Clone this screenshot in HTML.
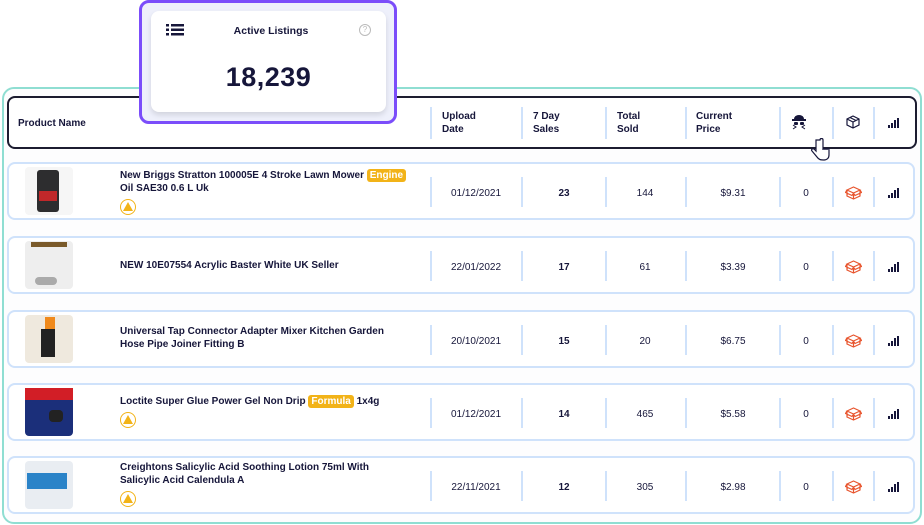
<!DOCTYPE html><html><head><style>
*{margin:0;padding:0;box-sizing:border-box}
body{width:924px;height:525px;background:#fff;font-family:"Liberation Sans",sans-serif;color:#16163a;position:relative;overflow:hidden}
.a{position:absolute}
.outer{left:2px;top:87px;width:920px;height:437px;border:2px solid #8fded2;border-radius:12px;background:#fdfdfe}
.hdr{left:7px;top:96px;width:910px;height:53px;border:2px solid #1c1c30;border-radius:8px;background:#fff}
.h{font-size:10px;font-weight:bold;line-height:13px}
.row{left:7px;width:908px;height:58px;border:2px solid #cfe2fb;border-radius:8px;background:#fff}
.div{width:2px;background:#cfe2fb}
.img{width:48px;height:48px;border-radius:4px;background:#f4f4f4}
.t{font-size:10px;font-weight:bold;line-height:13px;left:120px}
.tag{display:inline-block;background:#f2b318;color:#fff;border-radius:3px;padding:0 3px;line-height:13px}
.c{font-size:10px;text-align:center;width:80px}
.warn{width:16px;height:16px;border:1.5px solid #f2b318;border-radius:50%;left:120px}
.warn:after{content:"";position:absolute;left:2px;top:2px;border-left:5px solid transparent;border-right:5px solid transparent;border-bottom:9px solid #f2b318}
.bars{width:12px;height:10px}
.bars i{position:absolute;bottom:0;width:2px;background:#16163a}
</style></head><body>
<div class="a outer"></div>
<div class="a hdr"></div>
<div class="a h" style="left:18px;top:117px">Product Name</div>
<div class="a div" style="left:430px;top:107px;height:32px"></div>
<div class="a div" style="left:521px;top:107px;height:32px"></div>
<div class="a div" style="left:605px;top:107px;height:32px"></div>
<div class="a div" style="left:685px;top:107px;height:32px"></div>
<div class="a div" style="left:779px;top:107px;height:32px"></div>
<div class="a div" style="left:832px;top:107px;height:32px"></div>
<div class="a div" style="left:873px;top:107px;height:32px"></div>
<div class="a h" style="left:442px;top:110px">Upload<br>Date</div>
<div class="a h" style="left:533px;top:110px">7 Day<br>Sales</div>
<div class="a h" style="left:617px;top:110px">Total<br>Sold</div>
<div class="a h" style="left:696px;top:110px">Current<br>Price</div>
<svg class="a" style="left:790px;top:113px" width="18" height="18" viewBox="0 0 18 18"><path d="M4 6a5 4 0 0 1 10 0z" fill="#16163a"/><rect x="2" y="6" width="14" height="2" fill="#16163a"/><rect x="4" y="9" width="4" height="3" rx="1" fill="#16163a"/><rect x="10" y="9" width="4" height="3" rx="1" fill="#16163a"/><path d="M3 16l3-2-3-2M15 16l-3-2 3-2" stroke="#16163a" fill="none"/></svg>
<svg class="a" style="left:846px;top:115px" width="14" height="14" viewBox="0 0 14 14" fill="none" stroke="#16163a" stroke-width="1.2"><path d="M7 1l6 3v6l-6 3-6-3V4z M1 4l6 3 6-3 M7 7v6 M4 2.5l6 3"/></svg>
<div class="a bars" style="left:888px;top:118px"><i style="left:0;height:3px"></i><i style="left:3px;height:5px"></i><i style="left:6px;height:8px"></i><i style="left:9px;height:10px"></i></div>
<svg class="a" style="left:810px;top:138px" width="22" height="24" viewBox="0 0 22 24" fill="#fff" stroke="#16163a" stroke-width="1.2"><path d="M6 2v11l-2-2c-2-1-3 1-2 2l5 6c2 3 4 3 7 3s5-2 5-5v-5c0-2-2-2-2 0 0-2-2-2-2 0 0-2-2-2-2 0V2c0-2-3-2-3 0z"/></svg>

<div class="a row" style="top:162px"></div>
<div class="a row" style="top:236px"></div>
<div class="a row" style="top:310px"></div>
<div class="a row" style="top:383px"></div>
<div class="a row" style="top:456px"></div>

<div class="a img" style="left:25px;top:167px;background:#f6f6f6"><div class="a" style="left:12px;top:3px;width:22px;height:42px;background:#2d2d2f;border-radius:3px"></div><div class="a" style="left:14px;top:24px;width:18px;height:10px;background:#c0282a"></div></div>
<div class="a img" style="left:25px;top:241px;background:#eeeeee"><div class="a" style="left:6px;top:1px;width:36px;height:5px;background:#7a5a2a"></div><div class="a" style="left:10px;top:36px;width:22px;height:8px;background:#aaa;border-radius:4px"></div></div>
<div class="a img" style="left:25px;top:315px;background:#efe9de"><div class="a" style="left:20px;top:2px;width:10px;height:12px;background:#f08a1c"></div><div class="a" style="left:16px;top:14px;width:14px;height:28px;background:#222"></div></div>
<div class="a img" style="left:25px;top:388px;background:#1b2f7a"><div class="a" style="left:0;top:0;width:48px;height:12px;background:#d21e26"></div><div class="a" style="left:24px;top:22px;width:14px;height:12px;background:#222;border-radius:4px"></div></div>
<div class="a img" style="left:25px;top:461px;background:#e9edf2"><div class="a" style="left:2px;top:12px;width:40px;height:16px;background:#2a83c8"></div></div>

<div class="a t" style="top:169px">New Briggs Stratton 100005E 4 Stroke Lawn Mower <span class="tag">Engine</span><br>Oil SAE30 0.6 L Uk</div>
<div class="a warn" style="top:199px"></div>
<div class="a t" style="top:259px">NEW 10E07554 Acrylic Baster White UK Seller</div>
<div class="a t" style="top:325px">Universal Tap Connector Adapter Mixer Kitchen Garden<br>Hose Pipe Joiner Fitting B</div>
<div class="a t" style="top:395px">Loctite Super Glue Power Gel Non Drip <span class="tag">Formula</span> 1x4g</div>
<div class="a warn" style="top:412px"></div>
<div class="a t" style="top:461px">Creightons Salicylic Acid Soothing Lotion 75ml With<br>Salicylic Acid Calendula A</div>
<div class="a warn" style="top:491px"></div>

<div id="cells"></div>
<script>
var rows=[[162,"01/12/2021","23","144","$9.31"],[236,"22/01/2022","17","61","$3.39"],[310,"20/10/2021","15","20","$6.75"],[383,"01/12/2021","14","465","$5.58"],[456,"22/11/2021","12","305","$2.98"]];
var h="";
rows.forEach(function(r){var t=r[0];var cy=t+32;
[430,521,605,685,779,832,873].forEach(function(x){h+='<div class="a div" style="left:'+x+'px;top:'+(t+15)+'px;height:30px"></div>'});
h+='<div class="a c" style="left:436px;top:'+(cy-6)+'px">'+r[1]+'</div>';
h+='<div class="a c" style="left:524px;top:'+(cy-6)+'px;font-weight:bold">'+r[2]+'</div>';
h+='<div class="a c" style="left:605px;top:'+(cy-6)+'px">'+r[3]+'</div>';
h+='<div class="a c" style="left:693px;top:'+(cy-6)+'px">'+r[4]+'</div>';
h+='<div class="a c" style="left:766px;top:'+(cy-6)+'px">0</div>';
h+='<svg class="a" style="left:845px;top:'+(cy-9)+'px" width="17" height="15" viewBox="0 0 17 15" fill="none" stroke="#e8552e" stroke-width="1.2"><path d="M2 5l6.5-3 6.5 3-6.5 3z M2 5v6l6.5 3 6.5-3V5 M8.5 8v6 M2 5L0.5 7.5 7 10.5 8.5 8 M15 5l1.5 2.5-6.5 3L8.5 8"/></svg>';
h+='<div class="a bars" style="left:888px;top:'+(cy-6)+'px"><i style="left:0;height:3px"></i><i style="left:3px;height:5px"></i><i style="left:6px;height:8px"></i><i style="left:9px;height:10px"></i></div>';
});
document.getElementById("cells").innerHTML=h;
</script>

<div class="a" style="left:139px;top:0;width:258px;height:124px;border:3px solid #7b4dfa;border-radius:10px;background:#eef0fb"></div>
<div class="a" style="left:151px;top:11px;width:235px;height:101px;border-radius:8px;background:#fff;box-shadow:0 3px 6px rgba(0,0,0,.12)"></div>
<svg class="a" style="left:166px;top:24px" width="18" height="12" viewBox="0 0 18 12" fill="#16163a"><rect x="0" y="0" width="3" height="2.5"/><rect x="5" y="0" width="13" height="2.5"/><rect x="0" y="4.5" width="3" height="2.5"/><rect x="5" y="4.5" width="13" height="2.5"/><rect x="0" y="9" width="3" height="2.5"/><rect x="5" y="9" width="13" height="2.5"/></svg>
<div class="a" style="left:151px;top:25px;width:240px;text-align:center;font-size:10.5px;font-weight:bold">Active Listings</div>
<div class="a" style="left:359px;top:24px;width:12px;height:12px;border:1px solid #bbb;border-radius:50%;font-size:8px;color:#bbb;text-align:center;line-height:10px">?</div>
<div class="a" style="left:151px;top:62px;width:235px;text-align:center;font-size:27px;font-weight:bold;letter-spacing:0.5px">18,239</div>
</body></html>
